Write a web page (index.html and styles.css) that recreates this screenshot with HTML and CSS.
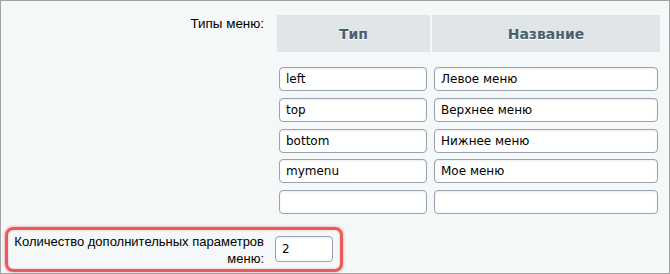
FILE: index.html
```html
<!DOCTYPE html>
<html lang="ru">
<head>
<meta charset="utf-8">
<link rel="stylesheet" href="styles.css">
</head>
<body>
<div class="frame">
  <div class="row-types">
    <div class="label">Типы меню:</div>
    <div class="types">
      <div class="head">
        <div class="hcell">Тип</div>
        <div class="hcell">Название</div>
      </div>
      <div class="inputs">
        <input class="inp inp-type" type="text" value="left">
        <input class="inp inp-name" type="text" value="Левое меню">
        <input class="inp inp-type" type="text" value="top">
        <input class="inp inp-name" type="text" value="Верхнее меню">
        <input class="inp inp-type" type="text" value="bottom">
        <input class="inp inp-name" type="text" value="Нижнее меню">
        <input class="inp inp-type" type="text" value="mymenu">
        <input class="inp inp-name" type="text" value="Мое меню">
        <input class="inp inp-type" type="text" value="">
        <input class="inp inp-name" type="text" value="">
      </div>
    </div>
  </div>
  <div class="row-count">
    <div class="label count-label">Количество дополнительных параметров меню:</div>
    <input class="inp inp-count" type="text" value="2">
  </div>
</div>
</body>
</html>
```
FILE: styles.css
```css
html, body {
  margin: 0;
  padding: 0;
  background: #f5f8f9;
}
.frame {
  width: 670px;
  height: 274px;
  box-sizing: border-box;
  border: 1px solid #a3a3a3;
  background: #f5f8f9;
  padding-top: 14px;
  font-family: "Liberation Sans", Arial, sans-serif;
  overflow: hidden;
}
.row-types {
  display: flex;
  gap: 13px;
}
.label {
  font-size: 13.4px;
  line-height: 16px;
  color: #000;
  text-align: right;
}
.row-types > .label {
  width: 263px;
  padding-top: 1px;
}
.types {
  width: 383px;
}
.head {
  display: grid;
  grid-template-columns: 153px 228px;
  column-gap: 2px;
}
.hcell {
  height: 37px;
  background: #e0e6e8;
  display: flex;
  align-items: center;
  justify-content: center;
  font-family: "DejaVu Sans", Verdana, sans-serif;
  font-weight: bold;
  font-size: 14px;
  color: #4a616d;
  text-shadow: 0 1px 0 #ffffff;
}
.inputs {
  display: grid;
  grid-template-columns: 148px 224px;
  column-gap: 7px;
  row-gap: 6.75px;
  margin-top: 15px;
  padding-left: 2px;
}
.inp {
  box-sizing: border-box;
  height: 24px;
  margin: 0;
  border: 1px solid #9aa3ad;
  border-radius: 4px;
  background: #fff;
  box-shadow: inset 0 1px 2px rgba(0,0,0,0.08);
  padding: 0 6px;
  font-family: "DejaVu Sans", Verdana, sans-serif;
  font-size: 12px;
  color: #000;
  outline: none;
}
.inp-type { width: 148px; }
.inp-name { width: 224px; }
.row-count {
  display: flex;
  align-items: center;
  gap: 11px;
  box-sizing: border-box;
  width: 338px;
  height: 45px;
  margin-top: 12.5px;
  margin-left: 4px;
  border: 3px solid #e95a5c;
  border-radius: 8px;
  box-shadow: 0 0 3px rgba(233,90,92,0.7), inset 0 0 2px rgba(233,90,92,0.5);
}
.count-label {
  width: 256px;
  font-size: 13px;
  line-height: 17px;
  padding-top: 2px;
}
.inp-count {
  width: 58px;
  height: 26px;
}
```
